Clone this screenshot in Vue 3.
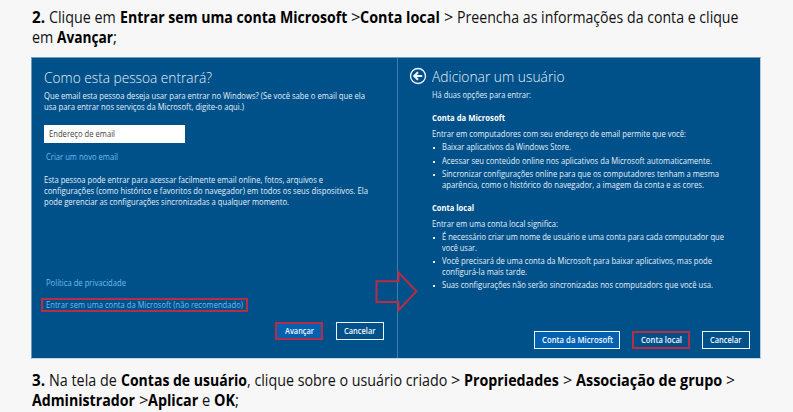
<script setup>
// Condenses or widens the letters of an element so that its text takes a given width.
const vFit = {
  mounted(el, { value }) {
    const natural = el.getBoundingClientRect().width
    el.style.display = 'inline-block'
    el.style.width = `${value}px`
    el.style.transformOrigin = 'left center'
    el.style.transform = `scaleX(${value / natural})`
  },
}

const stepTwo = [
  [
    { t: '2. ', w: 17, b: true }, { t: 'Clique em ', w: 70.5 },
    { t: 'Entrar sem uma conta Microsoft ', w: 231, b: true }, { t: '>', w: 9.5 },
    { t: 'Conta local ', w: 83.5, b: true }, { t: '> ', w: 13.5 },
    { t: 'Preencha as informações da conta e clique', w: 281.5 },
  ],
  [{ t: 'em ', w: 25 }, { t: 'Avançar', w: 56, b: true }, { t: ';', w: 4 }],
]
const stepThree = [
  [
    { t: '3. ', w: 17, b: true }, { t: 'Na tela de ', w: 71.5 },
    { t: 'Contas de usuário', w: 126, b: true }, { t: ', clique sobre o usuário criado ', w: 204 },
    { t: '> ', w: 13.5, }, { t: 'Propriedades ', w: 98.5, b: true }, { t: '> ', w: 13.5 },
    { t: 'Associação de grupo ', w: 150, b: true }, { t: '>', w: 9 },
  ],
  [
    { t: 'Administrador ', w: 106.5, b: true }, { t: '>', w: 9.5 },
    { t: 'Aplicar ', w: 54, b: true }, { t: 'e ', w: 12 }, { t: 'OK', w: 21, b: true }, { t: ';', w: 4 },
  ],
]
const intro = [
  { t: 'Que email esta pessoa deseja usar para entrar no Windows? (Se você sabe o email que ela', w: 321 },
  { t: 'usa para entrar nos serviços da Microsoft, digite-o aqui.)', w: 200 },
]
const about = [
  { t: 'Esta pessoa pode entrar para acessar facilmente email online, fotos, arquivos e', w: 279 },
  { t: 'configurações (como histórico e favoritos do navegador) em todos os seus dispositivos. Ela', w: 324 },
  { t: 'pode gerenciar as configurações sincronizadas a qualquer momento.', w: 245 },
]
const options = [
  {
    title: 'Conta da Microsoft', tw: 73,
    lead: 'Entrar em computadores com seu endereço de email permite que você:', lw: 254,
    items: [
      [{ t: 'Baixar aplicativos da Windows Store.', w: 129 }],
      [{ t: 'Acessar seu conteúdo online nos aplicativos da Microsoft automaticamente.', w: 270 }],
      [
        { t: 'Sincronizar configurações online para que os computadores tenham a mesma', w: 277 },
        { t: 'aparência, como o histórico do navegador, a imagem da conta e as cores.', w: 262 },
      ],
    ],
  },
  {
    title: 'Conta local', tw: 42,
    lead: 'Entrar em uma conta local significa:', lw: 126,
    items: [
      [
        { t: 'É necessário criar um nome de usuário e uma conta para cada computador que', w: 282 },
        { t: 'você usar.', w: 35 },
      ],
      [
        { t: 'Você precisará de uma conta da Microsoft para baixar aplicativos, mas pode', w: 270 },
        { t: 'configurá-la mais tarde.', w: 85 },
      ],
      [{ t: 'Suas configurações não serão sincronizadas nos computadors que você usa.', w: 271 }],
    ],
  },
]
</script>

<template>
  <main class="page">
    <p class="step">
      <span v-for="(line, i) in stepTwo" :key="i" class="step-line">
        <component :is="s.b ? 'strong' : 'span'" v-for="(s, j) in line" :key="j" v-fit="s.w">{{ s.t }}</component>
      </span>
    </p>

    <section class="shot">
      <div class="panel left">
        <h2><span v-fit="168">Como esta pessoa entrará?</span></h2>
        <p class="intro">
          <span v-for="l in intro" :key="l.t" class="line"><span v-fit="l.w">{{ l.t }}</span></span>
        </p>
        <div class="field"><span v-fit="66">Endereço de email</span></div>
        <a class="link create"><span v-fit="72">Criar um novo email</span></a>
        <p class="about">
          <span v-for="l in about" :key="l.t" class="line"><span v-fit="l.w">{{ l.t }}</span></span>
        </p>
        <a class="link privacy"><span v-fit="80">Política de privacidade</span></a>
        <a class="link skip"><span v-fit="197">Entrar sem uma conta da Microsoft (não recomendado)</span></a>
        <div class="actions">
          <button class="btn filled marked"><span v-fit="29">Avançar</span></button>
          <button class="btn"><span v-fit="31.5">Cancelar</span></button>
        </div>
      </div>

      <div class="panel right">
        <header>
          <svg width="18" height="18" viewBox="0 0 18 18" fill="none" stroke="#f0f8ff">
            <circle cx="9" cy="9" r="7.5" stroke-width="1.3" />
            <path d="M13.2 9H5.5M9 5.2L5.2 9L9 12.8" stroke-width="2" />
          </svg>
          <h2><span v-fit="132.5">Adicionar um usuário</span></h2>
        </header>
        <p class="line lead-in"><span v-fit="99">Há duas opções para entrar:</span></p>
        <div v-for="o in options" :key="o.title" class="option">
          <h3><span v-fit="o.tw">{{ o.title }}</span></h3>
          <p class="line"><span v-fit="o.lw">{{ o.lead }}</span></p>
          <ul>
            <li v-for="(item, i) in o.items" :key="i">
              <span v-for="l in item" :key="l.t" class="line"><span v-fit="l.w">{{ l.t }}</span></span>
            </li>
          </ul>
        </div>
        <div class="actions">
          <button class="btn wide filled"><span v-fit="71">Conta da Microsoft</span></button>
          <button class="btn local marked"><span v-fit="41">Conta local</span></button>
          <button class="btn"><span v-fit="31.5">Cancelar</span></button>
        </div>
      </div>

      <svg class="arrow" width="44" height="44" viewBox="0 0 44 44" fill="none" stroke="#b92c45" stroke-width="2">
        <path d="M1.5 11.2H23.5V2.5L41.5 21.3L23.5 40.2V32H1.5Z" />
      </svg>
    </section>

    <p class="step">
      <span v-for="(line, i) in stepThree" :key="i" class="step-line">
        <component :is="s.b ? 'strong' : 'span'" v-for="(s, j) in line" :key="j" v-fit="s.w">{{ s.t }}</component>
      </span>
    </p>
  </main>
</template>

<style>
body { margin: 0; background: #f7f7f7; }
</style>

<style scoped>
* { box-sizing: border-box; }
.page {
  height: 412px;
  padding: 7px 32px 0 31px;
  overflow: hidden;
  background: #f7f7f7;
  color: #000;
  font-family: "Open Sans", "Noto Sans", sans-serif;
}
p, h2, h3, ul { margin: 0; padding: 0; font-weight: 400; }
.step { padding-left: 1px; font-size: 15.5px; color: #111; }
.step-line { display: flex; height: 20px; line-height: 20px; white-space: pre; }
.step-line > * { flex: none; }
.step strong { font-weight: 700; color: #000; }
.shot {
  position: relative;
  display: flex;
  width: 730px;
  height: 302px;
  margin: 10px 0 11px;
  border: 1px solid #6f9dbf;
  border-right-color: #b5cbdc;
  border-bottom-color: #c5d8e6;
  background: #005089;
  color: #e4f1fb;
  font-size: 8.7px;
}
.shot + .step { padding-top: 0; }
.panel { display: flex; flex-direction: column; align-items: flex-start; white-space: pre; }
.left { width: 366px; padding: 9px 13px 0 12px; border-right: 1px solid #3d7fae; }
.right { flex: 1; padding: 8px 10px 0 11px; }
h2 { height: 20px; line-height: 20px; font-size: 15px; font-weight: 350; }
.line { display: block; height: 10.8px; line-height: 11.4px; }
.intro { margin-top: 4px; }
.field {
  width: 141px;
  height: 18px;
  margin-top: 12px;
  padding-left: 5px;
  line-height: 18px;
  background: #fff;
  color: #444;
}
.link { display: block; height: 12px; margin-left: 2px; line-height: 12px; color: #6fbdf3; }
.create { margin-top: 8px; }
.about { margin-top: 12.5px; }
.privacy { margin-top: 69.5px; }
.skip {
  height: 14px;
  width: 207px;
  margin: 9px 0 0 -3px;
  padding-left: 3px;
  line-height: 10px;
  border: 2px solid #b92c45;
}
.actions { display: flex; align-self: flex-end; gap: 12px; }
.left .actions { margin-top: 10px; gap: 13px; }
.btn {
  display: flex;
  align-items: center;
  justify-content: center;
  width: 48px;
  height: 18px;
  padding: 0;
  border: 1px solid #edf6fc;
  background: transparent;
  color: #f4faff;
  font-family: inherit;
  font-size: 8.7px;
  font-weight: 600;
  white-space: pre;
}
.btn span { flex: none; text-align: left; }
.filled { background: #0461b0; }
.wide { width: 86px; }
.local { width: 58px; }
.marked { border: 2px solid #b92c45; }
header { display: flex; align-items: center; gap: 5px; height: 20px; }
header h2 { line-height: 20px; }
.lead-in { margin: 4px 0 0 23px; }
.option { margin: 11px 0 0 23px; }
h3 { height: 11px; margin-bottom: 6px; line-height: 12px; font-size: 8.7px; font-weight: 700; color: #fff; }
ul { list-style: none; }
li { position: relative; margin-top: 2.6px; padding-left: 10px; }
li::before {
  content: "";
  position: absolute;
  left: 1px;
  top: 5px;
  width: 2px;
  height: 2px;
  background: #e4f1fb;
}
.right .actions { margin: auto 0 9px; align-self: flex-end; }
.arrow { position: absolute; left: 343px; top: 212px; }
</style>
